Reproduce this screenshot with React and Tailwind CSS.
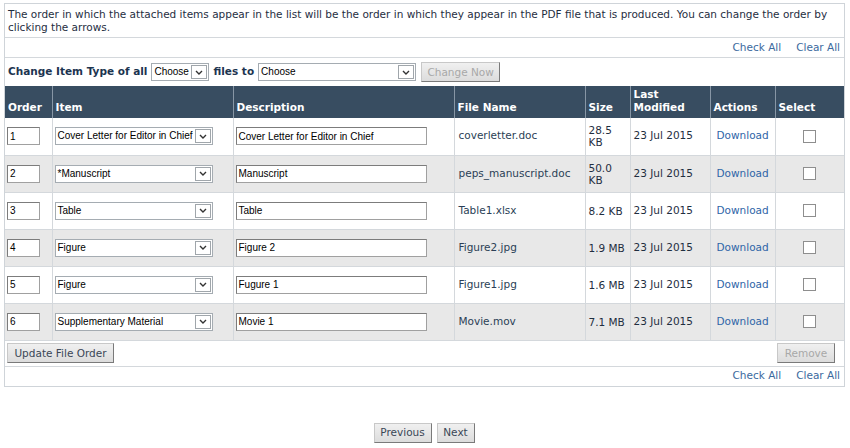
import React from 'react';

const rows = [
  { n: '1', item: 'Cover Letter for Editor in Chief', desc: 'Cover Letter for Editor in Chief', file: 'coverletter.doc', size: '28.5 KB' },
  { n: '2', item: '*Manuscript', desc: 'Manuscript', file: 'peps_manuscript.doc', size: '50.0 KB' },
  { n: '3', item: 'Table', desc: 'Table', file: 'Table1.xlsx', size: '8.2 KB' },
  { n: '4', item: 'Figure', desc: 'Figure 2', file: 'Figure2.jpg', size: '1.9 MB' },
  { n: '5', item: 'Figure', desc: 'Fugure 1', file: 'Figure1.jpg', size: '1.6 MB' },
  { n: '6', item: 'Supplementary Material', desc: 'Movie 1', file: 'Movie.mov', size: '7.1 MB' },
];

function FakeSelect({ value, width }) {
  return (
    <div
      className="flex items-center h-[18px] bg-white border border-[#a5acb2] font-['Liberation_Sans',Arial,sans-serif] font-normal text-[10px] text-black"
      style={{ width }}
    >
      <span className="flex-1 pl-[2px] truncate leading-none">{value}</span>
      <span className="flex items-center justify-center w-[16px] h-[14px] mr-[1px] border border-[#a0a6ab] bg-white">
        <svg width="8" height="5" viewBox="0 0 8 5">
          <path d="M1 1 L4 4 L7 1" fill="none" stroke="#333" strokeWidth="1.4" />
        </svg>
      </span>
    </div>
  );
}

function TextBox({ value, width }) {
  return (
    <div
      className="h-[18px] flex items-center pl-[2px] bg-white border border-[#a0a0a0] border-t-[#7c7c7c] border-l-[#7c7c7c] font-['Liberation_Sans',Arial,sans-serif] text-[10px] text-black"
      style={{ width }}
    >
      {value}
    </div>
  );
}

function Btn({ children, disabled, className = '' }) {
  return (
    <button
      className={
        'h-[20px] px-[5px] text-[10.5px] font-normal leading-none border border-[#c8c8c8] border-r-[#7a7a7a] border-b-[#7a7a7a] bg-gradient-to-b from-[#f0f0f0] to-[#dcdcdc] ' +
        (disabled ? 'text-[#a8a8a8]' : 'text-[#3a4656]') +
        ' ' +
        className
      }
    >
      {children}
    </button>
  );
}

export default function App() {
  return (
    <div className="w-[850px] h-[448px] bg-white font-['DejaVu_Sans',Verdana,sans-serif] text-[10.5px] text-[#1f2e3f]">
      <div className="ml-[4px] mt-[3px] w-[841px] border border-[#cfd4d9]">
        <p className="px-[3px] pt-[4px] pb-[3px] leading-[13px] border-b border-[#d4d8dc]">
          The order in which the attached items appear in the list will be the order in which they appear in the PDF file that is produced. You can change the order by clicking the arrows.
        </p>
        <div className="h-[20px] flex items-center justify-end gap-[15px] pr-[4px] border-b border-[#d4d8dc] text-[#3c6a9e]">
          <span>Check All</span>
          <span>Clear All</span>
        </div>
        <div className="h-[28px] flex items-center pl-[3px] gap-[4px] font-bold text-[#1c3450]">
          <span>Change Item Type of all</span>
          <FakeSelect value="Choose" width={58} />
          <span>files to</span>
          <FakeSelect value="Choose" width={158} />
          <Btn disabled className="ml-[1px] w-[79px]">Change Now</Btn>
        </div>
        <table className="w-full table-fixed border-collapse">
          <colgroup>
            <col className="w-[47px]" />
            <col className="w-[181px]" />
            <col className="w-[221px]" />
            <col className="w-[131px]" />
            <col className="w-[45px]" />
            <col className="w-[80px]" />
            <col className="w-[65px]" />
            <col />
          </colgroup>
          <thead>
            <tr className="h-[32px] bg-[#384d61] text-white font-bold text-left">
              {['Order', 'Item', 'Description', 'File Name', 'Size', 'Last Modified', 'Actions', 'Select'].map((h, i) => (
                <th
                  key={h}
                  className={
                    'align-bottom px-[3px] pb-[4px] leading-[13px] font-bold ' +
                    (i > 0 ? 'border-l border-[#8796a5]' : '') +
                    (h === 'Last Modified' ? ' pr-[20px]' : '')
                  }
                >
                  {h}
                </th>
              ))}
            </tr>
          </thead>
          <tbody>
            {rows.map((r, i) => (
              <tr key={r.n} className={'h-[37px] border-b border-[#d4d8dc] ' + (i % 2 ? 'bg-[#e8e8e8]' : 'bg-white')}>
                <td className="pl-[2px] align-middle">
                  <TextBox value={r.n} width={33} />
                </td>
                <td className="pl-[2px] border-l border-[#d4d8dc] align-middle">
                  <FakeSelect value={r.item} width={158} />
                </td>
                <td className="pl-[2px] border-l border-[#d4d8dc] align-middle">
                  <TextBox value={r.desc} width={191} />
                </td>
                <td className="pl-[4px] border-l border-[#d4d8dc] text-[#2b3f56]">{r.file}</td>
                <td className="pl-[3px] pr-[3px] border-l border-[#d4d8dc] leading-[12px]">{r.size}</td>
                <td className="pl-[3px] border-l border-[#d4d8dc] whitespace-nowrap">23 Jul 2015</td>
                <td className="pl-[6px] border-l border-[#d4d8dc] text-[#2f65a7]">Download</td>
                <td className="border-l border-[#d4d8dc] text-center">
                  <span className="inline-block align-middle w-[13px] h-[13px] border border-[#8e8e8e] bg-white" />
                </td>
              </tr>
            ))}
          </tbody>
        </table>
        <div className="h-[26px] flex items-center justify-between px-[2px] border-b border-[#d4d8dc]">
          <Btn className="w-[107px]">Update File Order</Btn>
          <Btn disabled className="w-[58px] mr-[7px]">Remove</Btn>
        </div>
        <div className="h-[19px] flex items-center justify-end gap-[15px] pr-[4px] text-[#3c6a9e]">
          <span>Check All</span>
          <span>Clear All</span>
        </div>
      </div>
      <div className="flex justify-center gap-[5px] mt-[36px]">
        <Btn className="w-[58px] ml-[-2px]">Previous</Btn>
        <Btn className="w-[38px]">Next</Btn>
      </div>
    </div>
  );
}
